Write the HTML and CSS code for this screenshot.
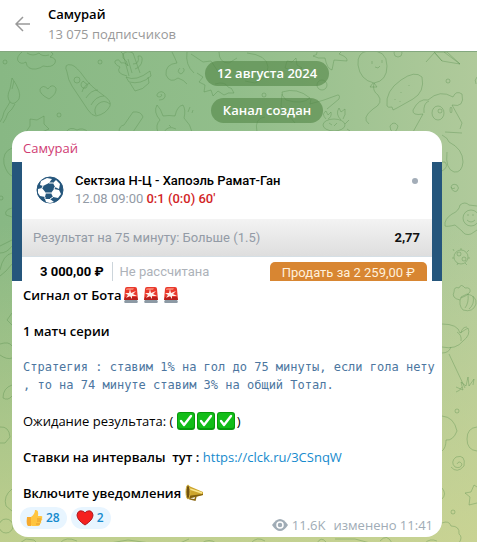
FILE: index.html
```html
<!DOCTYPE html>
<html lang="ru">
    <head>
        <meta charset="utf-8">
        <meta name="viewport" content="width=device-width">
        <title>Самурай</title>
        <link rel="stylesheet" href="styles.css">
    </head>
    <body>
        <svg width="0" height="0" class="defs">
            <symbol id="siren" viewBox="0 0 18 18">
                <path d="M3 14h12l1 2-1 1H3l-1-1z" fill="#8d9aa5"/>
                <path d="M3 3q0-2 2-2h8q2 0 2 2l1 11H2z" fill="#e8392c"/>
                <path d="M3 11h12l1 3H2z" fill="#b81f1c"/>
                <path d="M4 3q1-1 3-1h5l-1 2H4z" fill="#f77b68"/>
                <path d="M8 3l1 4 5-2-3 3 4 2-5 0 0 3-2-3-4 2 2-3-3-2 4 0z" fill="#fff0ec"/>
            </symbol>
            <symbol id="check" viewBox="0 0 18 18">
                <rect width="18" height="18" rx="3" fill="#079a0b"/>
                <rect x="1" y="1" width="16" height="15" rx="2" fill="#12bd18"/>
                <path d="M4 9l3 4 7-9" fill="none" stroke="#fff" stroke-width="2.4" stroke-linecap="round" stroke-linejoin="round"/>
            </symbol>
        </svg>

        <div class="header">
            <button class="back" aria-label="Назад">
                <svg width="16" height="16" viewBox="0 0 16 16"><path d="M15 8H1M8 1L1 8l7 7" fill="none" stroke="#999" stroke-width="1.5"/></svg>
            </button>
            <div>
                <div class="title">Самурай</div>
                <div class="members">13 075 подписчиков</div>
            </div>
        </div>

        <div class="chat">
            <svg class="doodles" viewBox="0 51 477 491" preserveAspectRatio="xMinYMin slice" aria-hidden="true">
                <!-- top row -->
                <circle cx="5" cy="61" r="2"/><circle cx="100" cy="61" r="2"/><circle cx="59" cy="114" r="2"/><circle cx="264" cy="94" r="2"/><circle cx="448" cy="80" r="2"/>
                <path d="M22 51q-6 5-4 9 3 4 8 1 1 8 10 7 5-1 7-3 9 2 12-3 2-5-5-6 5-3 1-5M27 52q6 4 12 0 3 4 10 2"/>
                <path d="M12 77q10 14 7 21-5 7-9 3-4-5 0-13zM10 101l-6 10q-1 6-4 10M15 103q-3 6-7 9-2 6-5 10M14 80l-2 8"/>
                <path d="M49 98q-10-5-9-10 3-5 8 0 4-6 8-1 1 6-7 11z"/>
                <path d="M67 71q-4-9 5-7 5 2 12 12 6 9 19 18 9 6 7 11-4 8-14 10-4 0-8-6L72 85q-4-6-5-14zM110 103q-6-5-12 0-5 5-2 11M82 91q2-7 8-9M86 97q5-8 12-8M91 104q5-9 13-9M81 83q2-5 4-1 4 1 1 5-5 1-5-4"/><circle cx="77" cy="79" r="3"/>
                <path d="M121 51q3 1 2 6 4 2 5 8-2-4-7-3-2-5-6-2-1 3 5 6-5 6 7 9M129 75l-6-22q4-4 10-1l7 20M133 63q7 0 5-8 5-1 4 5-1 6-7 8M128 58l4 14M126 76q10 5 24-6l1 5q-10 9-22 6zM130 82l5 8q8-1 14-8l-1-6"/>
                <path d="M159 99q7 0 6-6-3-4-7-1-3 4 2 4 3-1 1-3"/>
                <path d="M172 51q3 6 5 11-12 1-11 12 4 9 12 3 6 2 9 6M187 51q-2 13 7 21M180 67q-4 4 1 6 5-3 2-6M197 72l6 4-4 5 6 3-1 7 7-2 2 6 5-5 6 4q4-3 10-2-2-6-6-6-3-6-13-3M191 53l12 8 8-1 8 12M219 51q0 11 10 11l8-5"/>
                <path d="M26 131l4-6 0-7 7 1 7-4 0 8 5 5-7 3M119 131q0-6 5-7l9-13q8-1 10 5l-10 15M66 131q4-6 11-2 6-3 11 2"/>
                <path d="M158 131q-3-7 2-12-7-8-3-15 4 4 6 11 6-1 12 0 2-10 8-11 3 5 1 13 7 7 8 14M164 131q4-7 12-3M169 124l2 2M188 111l2-5M192 112l1-3"/>
                <path d="M247 52q20 2 21 14-1 12-13 16l-10-2M287 60l5 1 4-4 1 7 5 3-6 2-3 5-2-5-6-2zM317 51q1 3-4 4 5 3 12 2 2 11 7 12l2-10 13 1q1-4-8-7l2-2"/>
                <circle cx="322" cy="84" r="5"/><path d="M282 91q15-5 28 6-8 7-24 2-5-5-4-8zM282 93l-1 12 14 17M311 98l-1 5 14-4 11-4q6-3 4 3l-12 10M257 131q-3-14 8-15"/>
                <ellipse cx="334" cy="124" rx="11" ry="6"/><path d="M326 118q-5-5 0-8l2 4 3-3q1 5-3 7M341 119q-6-6-2-12l2 4 4-3q1 6-2 10M329 122l3 2M337 122l-3 3M345 123l4-4M347 128l3 2"/>
                <path d="M358 64q-1-13 10-14 19-2 19 15 0 15-13 17-14-3-16-18M373 82l-3 4h7l-3-4q-2 8 4 12 6 8-5 14-12 9-4 15M372 60v3M382 59v3M375 66l3 1 2-2"/>
                <circle cx="398" cy="52" r="4"/><path d="M426 61l9-10 12 0 13 12-18-3-8-9M435 52l7 8M460 63l-16-12"/>
                <path d="M387 105q-2-15 14-26 14-10 21-3 3 15-9 22l-16 9-4 2-1-3q-4 1-5-1zM395 98v1M401 91v1M409 84v1M400 100v1"/>
                <path d="M413 131l10-18q-11 2-10-4 6-12 15-10 12-11 25-3 3-7 9-3 3 14-10 11l10 18-2 6M424 112q-1-10 5-12"/><ellipse cx="438" cy="112" rx="6" ry="7"/><circle cx="440" cy="110" r="2"/><ellipse cx="451" cy="109" rx="1" ry="3"/>
                <path d="M390 125q4-6 8 0-2 7-5 6t-3-6M477 76q-3 3-1 7"/>
                <!-- right side -->
                <path d="M442 134q6 3 7 7 14 7 14 20-1 11-9 10-9-3-7-20M442 170q7-4 3-9h-3M445 131l17 1"/>
                <path d="M451 186q2 6 6 4 3-3 0-6-5-2-6 2 1 3 4 1"/>
                <path d="M460 204q5-4 9 0l8 1M460 204q-1 6-8 9-8 5-7 12 2 1 10-1l7 6q3 5 9 3l6-4"/><circle cx="471" cy="217" r="8"/><path d="M468 213v2M473 213v2M467 219q4 4 8 0"/>
                <circle cx="461" cy="256" r="7"/><circle cx="459" cy="253" r="2"/><circle cx="464" cy="258" r="2"/><path d="M454 250l-1-2M461 249v-2M467 251l2-2M468 257h2M465 262l2 2M458 262l-1 2M454 257h-2"/>
                <path d="M460 299q-9-2-6-8 0-6 5-4 2-5 6 0 6-1 5 4-3 4-9 6M461 296l6-3q10 2 9 10-3 9-13 6-5-5-2-13M465 307q4-5 3-14M469 308q6-5 4-13"/>
                <path d="M442 323q16 0 18 9l8-5q3 7-5 13-7 9-21 6M457 331q5 3 4 9M461 332q1-6 6-6M442 352q7 0 9-6M449 353l16 34M456 386l7 3-2-8 5 4 2-9 1 9 5-7-1 6M456 391q4-1 6-5"/>
                <circle cx="457" cy="410" r="2"/><path d="M442 415q12 1 15 15-4 10-11 9 0 8-4 11M477 426q-10 1-10 12t10 12"/><path d="M451 466q6 7 13-1 2-12-8-9-6 5-1 10 6 2 7-3-3-4-5 0"/>
                <path d="M465 492l6-1 3-7 3 2M465 492l5 4-1 8 8-2M442 487q5 6 0 11"/><circle cx="453" cy="511" r="2"/>
                <path d="M442 522q7-3 9 3 9 0 8 8 4 3 0 9M317 542q4-7 9-1M380 540q7-8 12 2M251 542q6-7 14-2M425 542q5-5 12-2M335 538h20l15 4"/>
                <!-- left side -->
                <path d="M12 147q-10 4-8 16 3 10 8 12M12 207q-8 2-6 7l6 2"/><circle cx="1" cy="197" r="2"/>
                <path d="M0 245l12-6M0 252q7 0 12-7M12 252q-9 2-12 17M12 263q-6 8-12 12M12 312l-5 7 5 5M0 343q9-3 12 2M0 354q7 5 12 3M3 397q0-10 9-13M3 397q5 3 9-2M0 426q9-1 10 10l-5 6H0M12 488q-9 7-6 17l6 5"/><circle cx="6" cy="525" r="7"/><path d="M20 542l6-4 8 1 3 3M60 542q6-7 17-2M110 542l18-3 22 3M180 542l9-4M202 542q7-5 14 0"/>
            </svg>

            <div class="service">12 августа 2024</div>
            <div class="service">Канал создан</div>

            <div class="message">
                <div class="author">Самурай</div>
                <div class="photo">
                    <div class="match">
                        <svg class="ball" width="28" height="28" viewBox="0 0 28 28">
                            <circle cx="14" cy="14" r="13" fill="#25567c" stroke="#25567c" stroke-width="1"/>
                            <path d="M5 5l6-3 5 1-3 4-6 3-3-1zM20 4l4 4-1 5-4-2-2-4zM2 13l4-1 4 5-1 4-5-1-2-3zM18 13l5 1 2 4-3 4-5-1-2-4zM9 23l5 0 4 3-4 1-4-1z" fill="#fff"/>
                            <path d="M13 7l4 0M10 17l5 0M19 11l-1 2M9 21v2M17 21l-3 2M7 10l-1 2" stroke="#fff"/>
                        </svg>
                        <div class="teams">
                            <div class="pair">Сектзиа Н-Ц - Хапоэль Рамат-Ган</div>
                            <div class="when">12.08 09:00 <b>0:1 (0:0) 60'</b></div>
                        </div>
                        <span class="dot"></span>
                    </div>
                    <div class="result">
                        <span>Результат на 75 минуту: Больше (1.5)</span>
                        <b>2,77</b>
                    </div>
                    <div class="stake">
                        <b>3 000,00 ₽</b>
                        <span class="status">Не рассчитана</span>
                        <button class="sell">Продать за 2 259,00 ₽</button>
                    </div>
                </div>
                <div class="text">
                    <b>Сигнал от Бота</b><svg class="siren"><use href="#siren"/></svg><svg class="siren"><use href="#siren"/></svg><svg class="siren"><use href="#siren"/></svg><br>
                    <br>
                    <b>1 матч серии</b><br>
                    <br>
                    <code>Стратегия : ставим 1% на гол до 75 минуты, если гола нету<br>, то на 74 минуте ставим 3% на общий Тотал.</code>
                    <br>
                    Ожидание результата: ( <svg class="check"><use href="#check"/></svg><svg class="check"><use href="#check"/></svg><svg class="check"><use href="#check"/></svg>)<br>
                    <br>
                    <b>Ставки на интервалы &nbsp;тут :</b> <a href="https://clck.ru/3CSnqW">https://clck.ru/3CSnqW</a><br>
                    <br>
                    <b>Включите уведомления</b>
                    <svg class="horn" viewBox="0 0 18 18">
                        <path d="M5 11l0 4 5 1 1-4" fill="none" stroke="#8c6813" stroke-width="1.5"/>
                        <path d="M4 2l14 6v3L2 15z" fill="#cda52c"/>
                        <path d="M2 12l16-2v1L2 15z" fill="#80600f"/>
                        <path d="M5 5l12 4" stroke="#f9e58c" stroke-width="1.5"/>
                        <ellipse cx="3" cy="8" rx="2" ry="7" fill="#705213" stroke="#d9b744"/>
                    </svg>
                </div>
                <div class="bottom">
                    <button class="reaction">
                        <svg width="18" height="18" viewBox="0 0 18 18">
                            <path d="M6 8q4-3 4-7 4-1 3 6h3q2 0 1 2 1 2-1 3 1 2-1 3 0 2-2 2H7l-2-1z" fill="#ffc540"/>
                            <path d="M2 8h4v9H3q-2-1-1-9z" fill="#f6a92e"/>
                            <path d="M12 10h4M12 12h4M11 15h4" stroke="#e59a2c"/>
                        </svg>
                        28
                    </button>
                    <button class="reaction">
                        <svg width="18" height="18" viewBox="0 0 18 18"><path d="M9 16Q1 11 1 6q1-5 5-4 2 0 3 2 1-2 3-2 4-1 5 4 0 5-8 10z" fill="#f5201f" stroke="#ae1b22"/></svg>
                        2
                    </button>
                    <span class="info">
                        <svg width="16" height="12" viewBox="0 0 16 12"><path d="M0 6q8-12 16 0-8 12-16 0z" fill="#a0acb6"/><circle cx="8" cy="6" r="3" fill="none" stroke="#fff" stroke-width="1.5"/></svg>
                        <span>11.6K</span>
                        <span class="time">изменено 11:41</span>
                    </span>
                </div>
            </div>
        </div>
    </body>
</html>
```

FILE: styles.css
```css
body{
    margin:0;
    min-height:100vh;
    display:flex;
    flex-direction:column;
    font:13px/18px "Open Sans", "Noto Sans", sans-serif;
    color:#000;
}
button{font:inherit;border:none;padding:0;cursor:pointer}
.defs{position:absolute}

.header
{
    display:flex;
    align-items:center;
    height:51px;
    box-sizing:border-box;
    padding-bottom:3px;
    background:#fff;
}
.back{width:48px;height:48px;padding-left:15px;box-sizing:border-box;background:none;text-align:left}
.back svg{display:block}
.title{font-weight:600;line-height:20px}
.members{color:#999;line-height:20px}

.chat
{
    position:relative;
    flex:1;
    box-sizing:border-box;
    overflow:hidden;
    border-top:1px solid #83a77e;
    padding:9px 35px 5px 12px;
    background:
        linear-gradient(to bottom, rgba(209,214,145,0) 35%, rgba(209,214,145,.75)),
        linear-gradient(to right, #88b884, #92be8b 50%, #b0ca9b);
    display:flex;
    flex-direction:column;
    align-items:center;
}
.doodles
{
    position:absolute;
    left:0;
    top:0;
    width:100%;
    height:100%;
    fill:none;
    stroke:#528a4a;
    stroke-opacity:.36;
    stroke-linejoin:round;
}
.service
{
    position:relative;
    margin:0 0 12px 80px;
    padding:0 12px;
    line-height:25px;
    border-radius:13px;
    background:rgba(82,133,70,.6);
    color:#fff;
    font-weight:600;
}

.message
{
    position:relative;
    align-self:stretch;
    margin-top:-4px;
    padding-bottom:8px;
    border-radius:16px;
    background:#fff;
}
.author{padding:8px 11px 5px;color:#d03b73;font-weight:500}

.photo
{
    height:119px;
    overflow:hidden;
    border:solid #25567c;
    border-width:0 10px;
    background:#fff;
    font-family:Roboto, sans-serif;
}
.match{display:flex;height:57px;box-sizing:border-box;padding:10px 14px 0}
.ball{margin-top:4px}
.teams{flex:1;padding-left:11px}
.pair{font-weight:500}
.when{color:#939ba6;line-height:17px}
.when b{color:#d21f26;font-weight:500}
.dot{width:6px;height:6px;margin-top:6px;border-radius:50%;background:#a3adb8}
.result
{
    display:flex;
    justify-content:space-between;
    align-items:center;
    height:38px;
    box-sizing:border-box;
    padding:0 12px 0 11px;
    border-bottom:1px solid #d5dfe5;
    background:linear-gradient(#f3f3f3, #dedede);
    color:#939ba6;
}
.result b{color:#111}
.stake{display:flex;align-items:flex-start;padding:5px 5px 0 18px;line-height:20px}
.status{margin-left:8px;padding-left:7px;border-left:1px solid #ccd5db;color:#adb2b9}
.sell
{
    margin-left:auto;
    height:28px;
    padding:0 12px 6px;
    border-radius:5px;
    background:#d88632;
    color:#fff0dc;
}

.text{padding:5px 11px 0}
.text b{font-weight:600}
.text code{display:block;font:12px/18px "DejaVu Sans Mono", monospace;color:#4c76a0;white-space:nowrap}
.text a{color:#168acd;text-decoration:none}
.text svg{width:18px;height:18px;vertical-align:baseline;margin:-4px 2px -4px 0}
.text .siren{margin:-4px 1px}

.bottom{display:flex;padding:5px 8px 0;gap:4px;color:#a0acb6}
.reaction
{
    display:flex;
    align-items:center;
    gap:3px;
    height:22px;
    padding:0 7px 0 5px;
    border-radius:11px;
    background:#e8f5ff;
    color:#168acd;
    font-size:12px;
    font-weight:600;
}
.info{display:flex;align-items:center;gap:4px;margin:7px 1px -7px auto}
.time{margin-left:4px}
```
